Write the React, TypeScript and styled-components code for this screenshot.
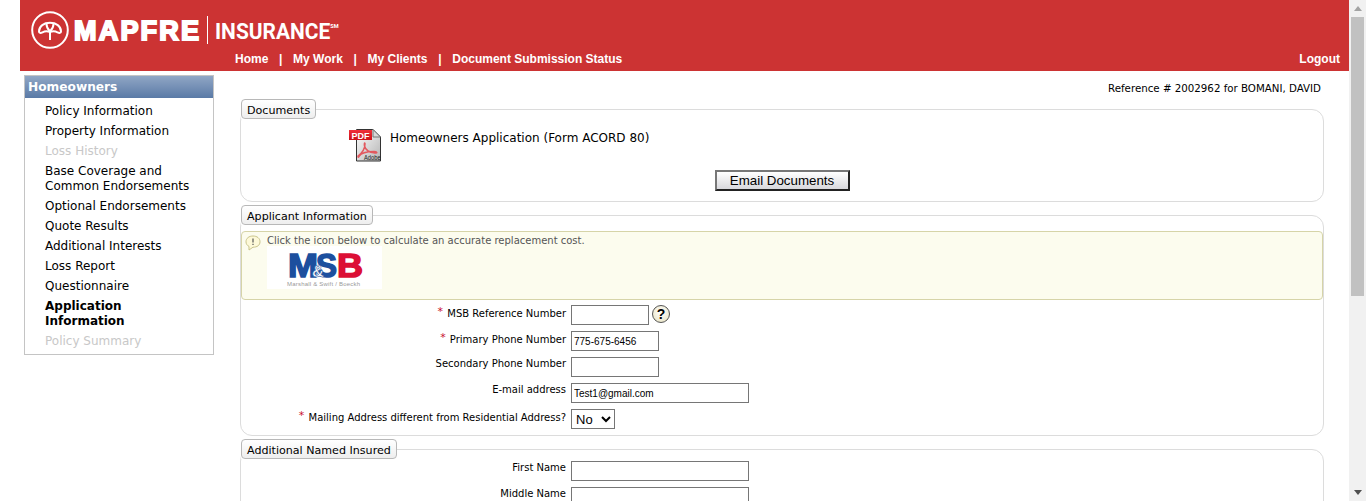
import React, {FC} from "react";
import styled, {createGlobalStyle} from "styled-components";

const GlobalStyle = createGlobalStyle`
html, body {
  margin: 0;
  padding: 0;
  background: #fff;
  overflow: hidden;
}
body {
  font-family: "DejaVu Sans", Verdana, sans-serif;
  color: #000;
}
`;

const NAV_LINKS = ["Home", "My Work", "My Clients", "Document Submission Status"];

const MENU: {label: string; state?: "disabled" | "active"}[] = [
  {label: "Policy Information"},
  {label: "Property Information"},
  {label: "Loss History", state: "disabled"},
  {label: "Base Coverage and Common Endorsements"},
  {label: "Optional Endorsements"},
  {label: "Quote Results"},
  {label: "Additional Interests"},
  {label: "Loss Report"},
  {label: "Questionnaire"},
  {label: "Application Information", state: "active"},
  {label: "Policy Summary", state: "disabled"},
];

const LogoMark: FC = () => <svg width="38" height="38" viewBox="0 0 38 38" fill="none" stroke="#fff">
  <circle cx="19" cy="19" r="17.8" strokeWidth="2"/>
  <path d="M8 20.5C8 15 13 11.8 19 11.8C25 11.8 30 15 30 20.5C30 22 28.5 22.3 26.5 21.3C24.5 20.3 22.5 19.8 19 21C15.5 19.8 13.5 20.3 11.5 21.3C9.5 22.3 8 22 8 20.5Z" strokeWidth="2"/>
  <path d="M15.5 13C15.5 17 19 20.5 19 20.5C19 20.5 22.5 17 22.5 13M19 20.5V29" strokeWidth="2"/>
</svg>;

const PdfIcon: FC = () => <svg width="33" height="34" viewBox="0 0 33 34">
  <defs>
    <linearGradient id="pdfPage" x1="0" y1="0" x2="1" y2="1">
      <stop offset="0" stopColor="#ffffff"/>
      <stop offset="1" stopColor="#b4b4b4"/>
    </linearGradient>
    <linearGradient id="pdfTag" x1="0" y1="0" x2="0" y2="1">
      <stop offset="0" stopColor="#f0303a"/>
      <stop offset="1" stopColor="#cc1018"/>
    </linearGradient>
  </defs>
  <path d="M7.5 1.5H24L31.5 9V33H7.5Z" fill="url(#pdfPage)" stroke="#333"/>
  <path d="M24 1.5V9H31.5Z" fill="#d8d8d8" stroke="#777"/>
  <rect x="0" y="2" width="23" height="10" fill="url(#pdfTag)"/>
  <text x="11.5" y="10.5" textAnchor="middle" fontFamily="'Liberation Sans', sans-serif" fontWeight="700" fontSize="9" fill="#fff">PDF</text>
  <path d="M9 28C13 25 16 21 16 16C16 14 15 15 15.5 18C16.5 22 20 24.5 26 25C29 25.2 28 23.5 25 23.5C19 23.5 12 25 10 28.5C9 30 9 29 9 28Z" fill="none" stroke="#e2595f" strokeWidth="1.5"/>
  <text transform="translate(15 32) scale(0.72 1)" fontFamily="'Liberation Sans', sans-serif" fontSize="8" fill="#222">Adobe</text>
</svg>;

const MsbLogo: FC = () => <svg width="115" height="43" viewBox="0 0 115 43">
  <rect width="115" height="43" fill="#fff"/>
  <text x="21" y="31" fontFamily="'Liberation Sans', sans-serif" fontWeight="700" fontSize="33" fill="#1c4f9e" stroke="#1c4f9e" strokeWidth="1.5" textLength="30" lengthAdjust="spacingAndGlyphs">M</text>
  <text x="49" y="31" fontFamily="'Liberation Sans', sans-serif" fontWeight="700" fontSize="33" fill="#1c4f9e" stroke="#1c4f9e" strokeWidth="1.5" textLength="21" lengthAdjust="spacingAndGlyphs">S</text>
  <text x="45" y="31" fontFamily="'Liberation Sans', sans-serif" fontWeight="700" fontSize="16" fill="#fff" stroke="#1c4f9e" strokeWidth="0.5" textLength="12" lengthAdjust="spacingAndGlyphs">&amp;</text>
  <text x="70" y="31" fontFamily="'Liberation Sans', sans-serif" fontWeight="700" fontSize="33" fill="#dc0f35" stroke="#dc0f35" strokeWidth="1.5" textLength="26" lengthAdjust="spacingAndGlyphs">B</text>
  <text x="20" y="40" fontFamily="'Liberation Sans', sans-serif" fontSize="6" fill="#999" textLength="73">Marshall &amp; Swift / Boeckh</text>
</svg>;

const NoteIcon: FC = () => <svg width="16" height="16" viewBox="0 0 16 16">
  <path d="M8 1C12 1 15 3.2 15 6.8C15 10.4 12 12.2 8 12.2L4 15V11.4C2 10.4 1 8.8 1 6.8C1 3.2 4 1 8 1Z" fill="#fdf9d8" stroke="#c9c48c"/>
  <path d="M8 3.5V7.5M8 8.8V10" stroke="#555" strokeWidth="1.2"/>
</svg>;

const App: FC = () => <Shell>
  <GlobalStyle/>
  <Page>
    <Header>
      <LogoRow>
        <LogoMark/>
        <Brand>MAPFRE</Brand>
        <BrandDivider/>
        <BrandSub>INSURANCE<sup>SM</sup></BrandSub>
      </LogoRow>
      <NavRow>
        <Nav>
          {NAV_LINKS.map((link, i) => <React.Fragment key={link}>
            {i > 0 && <NavBar>|</NavBar>}
            <NavLink>{link}</NavLink>
          </React.Fragment>)}
        </Nav>
        <NavLink>Logout</NavLink>
      </NavRow>
    </Header>
    <Body>
      <Sidebar>
        <SidebarTitle>Homeowners</SidebarTitle>
        <MenuList>
          {MENU.map(item => <MenuItem key={item.label} $state={item.state}>{item.label}</MenuItem>)}
        </MenuList>
      </Sidebar>
      <Main>
        <ReferenceLine>Reference # 2002962 for BOMANI, DAVID</ReferenceLine>
        <Section>
          <SectionLegend>Documents</SectionLegend>
          <DocRow>
            <PdfIcon/>
            <DocName>Homeowners Application (Form ACORD 80)</DocName>
          </DocRow>
          <ButtonRow>
            <EmailButton>Email Documents</EmailButton>
          </ButtonRow>
        </Section>
        <Section>
          <SectionLegend>Applicant Information</SectionLegend>
          <Notice>
            <NoteIcon/>
            <NoticeBody>
              <NoticeText>Click the icon below to calculate an accurate replacement cost.</NoticeText>
              <MsbLogo/>
            </NoticeBody>
          </Notice>
          <FormRows $top={5}>
            <FormRow>
              <FieldLabel $required><Req>*</Req> MSB Reference Number</FieldLabel>
              <TextInput $width={78} readOnly value=""/>
              <HelpIcon>?</HelpIcon>
            </FormRow>
            <FormRow>
              <FieldLabel $required><Req>*</Req> Primary Phone Number</FieldLabel>
              <TextInput $width={88} readOnly value="775-675-6456"/>
            </FormRow>
            <FormRow>
              <FieldLabel>Secondary Phone Number</FieldLabel>
              <TextInput $width={88} readOnly value=""/>
            </FormRow>
            <FormRow>
              <FieldLabel>E-mail address</FieldLabel>
              <TextInput $width={178} readOnly value="Test1@gmail.com"/>
            </FormRow>
            <FormRow>
              <FieldLabel $required><Req>*</Req> Mailing Address different from Residential Address?</FieldLabel>
              <SelectInput defaultValue="No">
                <option>No</option>
                <option>Yes</option>
              </SelectInput>
            </FormRow>
          </FormRows>
        </Section>
        <Section>
          <SectionLegend>Additional Named Insured</SectionLegend>
          <FormRows $top={2}>
            <FormRow>
              <FieldLabel>First Name</FieldLabel>
              <TextInput $width={178} readOnly value=""/>
            </FormRow>
            <FormRow>
              <FieldLabel>Middle Name</FieldLabel>
              <TextInput $width={178} readOnly value=""/>
            </FormRow>
          </FormRows>
        </Section>
      </Main>
    </Body>
  </Page>
  <Scrollbar>
    <ArrowUp/>
    <Thumb/>
    <Track/>
    <ArrowDown/>
  </Scrollbar>
</Shell>;
export default App;

const Shell = styled.div`
display: flex;
height: 501px;
overflow: hidden;
`;
const Page = styled.div`
flex: 1;
min-width: 0;
overflow: hidden;
`;
const Header = styled.header`
margin-left: 20px;
height: 71px;
background: #cc3333;
color: #fff;
display: flex;
flex-direction: column;
justify-content: space-between;
box-sizing: border-box;
`;
const LogoRow = styled.div`
display: flex;
align-items: center;
padding: 11px 0 0 11px;
height: 38px;
`;
const Brand = styled.span`
margin: 2px 0 0 5px;
font-family: "Liberation Sans", Arial, sans-serif;
font-weight: 700;
font-size: 27px;
letter-spacing: 2.2px;
-webkit-text-stroke: 2px #fff;
line-height: 1;
`;
const BrandDivider = styled.span`
width: 1px;
height: 28px;
margin-left: 6px;
background: #fff;
`;
const BrandSub = styled.span`
margin: 3px 0 0 7px;
font-family: Roboto, "Liberation Sans", sans-serif;
font-weight: 700;
font-size: 22.5px;
line-height: 1;
transform: scaleX(0.93);
transform-origin: left center;

sup {
  font-size: 6px;
  font-weight: 700;
  vertical-align: 11px;
  line-height: 0;
}
`;
const NavRow = styled.nav`
display: flex;
justify-content: space-between;
padding: 0 9px 4px 215px;
font-family: "Liberation Sans", Arial, sans-serif;
font-weight: 700;
font-size: 12px;
line-height: 15px;
`;
const Nav = styled.div`
display: flex;
`;
const NavLink = styled.span``;
const NavBar = styled.span`
width: 24.7px;
text-align: center;
`;
const Body = styled.div`
display: flex;
align-items: flex-start;
padding: 4px 0 0 24px;
`;
const Sidebar = styled.aside`
flex: none;
width: 190px;
box-sizing: border-box;
border: 1px solid #c4c4c4;
`;
const SidebarTitle = styled.div`
height: 22px;
padding-left: 3px;
background: linear-gradient(#90a6c5, #5a7aa6);
color: #fff;
font-weight: 700;
font-size: 12.2px;
line-height: 23px;
`;
const MenuList = styled.div`
display: flex;
flex-direction: column;
gap: 5px;
padding: 6px 18px 5px 20px;
`;
const MenuItem = styled.div<{$state?: "disabled" | "active"}>`
font-size: 12px;
line-height: 15px;
color: ${p => p.$state === "disabled" ? "#c8c8c8" : "#000"};
font-weight: ${p => p.$state === "active" ? 700 : 400};
`;
const Main = styled.main`
flex: none;
width: 1084px;
margin-left: 26px;
`;
const ReferenceLine = styled.div`
height: 24px;
padding: 7px 3px 0 0;
box-sizing: border-box;
text-align: right;
font-size: 10.25px;
line-height: 12px;
`;
const Section = styled.fieldset`
margin: 0 0 3px;
padding: 0;
min-width: 0;
border: 1px solid #dcdcdc;
border-radius: 12px;
`;
const SectionLegend = styled.legend`
margin: 0;
padding: 1px 5px 0;
height: 20px;
box-sizing: border-box;
border: 1px solid #b8b8b8;
border-radius: 4px;
background: linear-gradient(#ffffff, #eeeeee);
font-size: 11.1px;
line-height: 19px;
`;
const DocRow = styled.div`
display: flex;
align-items: flex-start;
gap: 8px;
padding: 9px 0 0 108px;
height: 51px;
box-sizing: border-box;
`;
const DocName = styled.span`
font-size: 12px;
line-height: 15px;
padding-top: 3px;
`;
const ButtonRow = styled.div`
display: flex;
justify-content: center;
padding: 0 0 10px;
`;
const EmailButton = styled.button`
width: 135px;
height: 21px;
padding: 0;
border: 2px solid;
border-color: #777 #222 #222 #777;
background: linear-gradient(#ffffff, #d8d8dc);
font-family: "Liberation Sans", Arial, sans-serif;
font-size: 13.33px;
line-height: 15px;
color: #000;
`;
const Notice = styled.div`
display: flex;
gap: 6px;
height: 69px;
box-sizing: border-box;
margin-top: 6px;
padding: 3px 0 0 3px;
background: #fcfcee;
border: 1px solid #d6d4a8;
border-radius: 4px;
`;
const NoticeBody = styled.div`
display: flex;
flex-direction: column;
`;
const NoticeText = styled.div`
font-size: 10px;
line-height: 11px;
color: #555;
`;
const FormRows = styled.div<{$top: number}>`
display: flex;
flex-direction: column;
gap: 6px;
padding: ${p => p.$top}px 0 6px;
`;
const FormRow = styled.div`
display: flex;
align-items: flex-start;
height: 20px;
`;
const FieldLabel = styled.label<{$required?: boolean}>`
flex: none;
width: 325px;
margin-right: 5px;
text-align: right;
font-size: 10px;
line-height: 12px;
padding-top: ${p => p.$required ? 3 : 1}px;
box-sizing: border-box;
`;
const Req = styled.span`
position: relative;
top: -2px;
margin-right: 1px;
color: #c8102e;
font-size: 11px;
`;
const TextInput = styled.input<{$width: number}>`
width: ${p => p.$width}px;
height: 20px;
box-sizing: border-box;
margin: 0;
padding: 1px 2px;
border: 1px solid #767676;
font-family: "Liberation Sans", Arial, sans-serif;
font-size: 10px;
color: #000;
outline: none;
`;
const SelectInput = styled.select`
width: 44px;
height: 20px;
box-sizing: border-box;
margin: 0;
border: 1px solid #767676;
background: #fff;
font-family: "Liberation Sans", Arial, sans-serif;
font-size: 13px;
`;
const HelpIcon = styled.span`
width: 18px;
height: 18px;
margin-left: 3px;
box-sizing: border-box;
border: 1px solid #555;
border-radius: 50%;
background: radial-gradient(circle at 50% 40%, #fff, #e6e0bc);
font-family: "Liberation Sans", Arial, sans-serif;
font-weight: 700;
font-size: 14px;
line-height: 16px;
text-align: center;
`;
const Scrollbar = styled.div`
flex: none;
width: 17px;
height: 501px;
box-sizing: border-box;
padding: 0 2px;
background: #f1f1f1;
display: flex;
flex-direction: column;
align-items: center;
`;
const ArrowUp = styled.div`
flex: none;
margin: 6px 0 6px;
width: 0;
height: 0;
border-left: 4px solid transparent;
border-right: 4px solid transparent;
border-bottom: 5px solid #a3a3a3;
`;
const Thumb = styled.div`
flex: none;
width: 13px;
height: 279px;
background: #c1c1c1;
`;
const Track = styled.div`
flex: 1;
`;
const ArrowDown = styled.div`
flex: none;
margin: 6px 0 6px;
width: 0;
height: 0;
border-left: 4px solid transparent;
border-right: 4px solid transparent;
border-top: 5px solid #505050;
`;
